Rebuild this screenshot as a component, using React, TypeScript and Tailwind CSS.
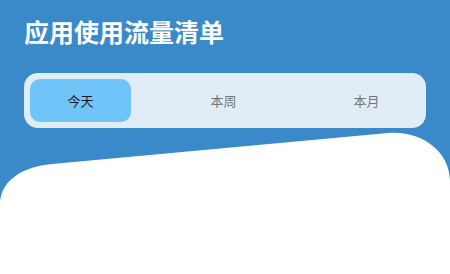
import { useState } from "react";

const TABS = ["今天", "本周", "本月"] as const;

export default function App() {
  const [active, setActive] = useState<string>("今天");

  return (
    <div
      className="relative w-[450px] h-[274px] overflow-hidden bg-[#3a89c8]"
      style={{ fontFamily: '"Noto Sans CJK SC", "Noto Sans", sans-serif' }}
    >
      <div className="px-[24px] pt-[15px]">
        <h1 className="text-[25px] leading-[33px] font-bold text-white">应用使用流量清单</h1>
      </div>

      <div className="mx-[24px] mt-[25px] h-[55px] rounded-[14px] bg-[#e0ecf6] px-[6px] py-[6px] flex gap-[42px]">
        {TABS.map((t) => (
          <button
            key={t}
            onClick={() => setActive(t)}
            className={[
              "w-[101px] h-full rounded-[10px] text-[13px] flex items-center justify-center",
              active === t ? "bg-[#6fc5f7] text-[#1b1b1b]" : "text-[#767676]",
            ].join(" ")}
          >
            {t}
          </button>
        ))}
      </div>

      {/* white card with slanted top */}
      <svg className="absolute left-0 top-0" width="450" height="274" viewBox="0 0 450 274">
        <path
          d="M0 274 L0 202 C2 180 22 167 52 164 L388 133 C420 130 449 150 450 180 L450 274 Z"
          fill="#ffffff"
        />
      </svg>
    </div>
  );
}
